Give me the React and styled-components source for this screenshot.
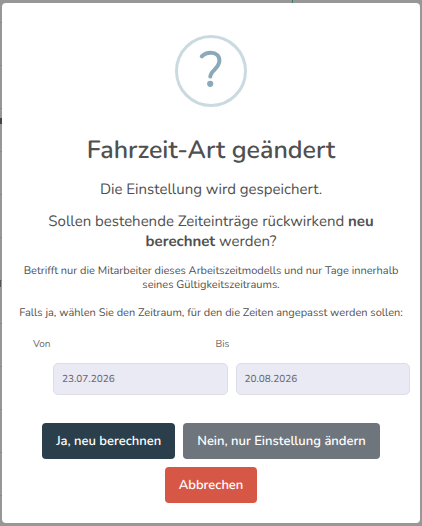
import React, { useState } from "react";
import styled, { createGlobalStyle } from "styled-components";

function App() {
	const [from, setFrom] = useState("23.07.2026");
	const [to, setTo] = useState("20.08.2026");

	return (
		<Backdrop>
			<GlobalStyle />
			<Dialog role="dialog" aria-modal="true" aria-labelledby="dialog-title">
				<QuestionIcon viewBox="0 0 72 72" aria-hidden="true">
					<circle cx="36" cy="36" r="34.5" stroke="#c9dae1" strokeWidth="3" />
					<path
						d="M26.8 21.4C29 19 32.3 17.8 35.8 17.8C41.3 17.8 44.4 20.9 44.4 25.6C44.4 29.8 42 32.2 39.4 34.8C36.8 37.4 35.5 39 35.3 41.6"
						stroke="#8aaaba"
						strokeWidth="4"
						strokeLinecap="round"
					/>
					<circle cx="35.2" cy="48.8" r="3.1" fill="#8aaaba" />
				</QuestionIcon>
				<Title id="dialog-title">Fahrzeit-Art geändert</Title>
				<Lead>Die Einstellung wird gespeichert.</Lead>
				<Lead>
					Sollen bestehende Zeiteinträge rückwirkend <strong>neu</strong>{" "}
					<strong>berechnet</strong> werden?
				</Lead>
				<Note>
					Betrifft nur die Mitarbeiter dieses Arbeitszeitmodells und nur Tage
					innerhalb seines Gültigkeitszeitraums.
				</Note>
				<Note>
					Falls ja, wählen Sie den Zeitraum, für den die Zeiten angepasst werden
					sollen:
				</Note>
				<Labels>
					<label htmlFor="from">Von</label>
					<label htmlFor="to">Bis</label>
				</Labels>
				<Inputs>
					<DateInput
						id="from"
						value={from}
						onChange={(e) => setFrom(e.target.value)}
					/>
					<DateInput
						id="to"
						value={to}
						onChange={(e) => setTo(e.target.value)}
					/>
				</Inputs>
				<Actions>
					<Button $color="#2a3f4b">Ja, neu berechnen</Button>
					<Button $color="#6e757d">Nein, nur Einstellung ändern</Button>
					<Button $color="#d65745">Abbrechen</Button>
				</Actions>
			</Dialog>
		</Backdrop>
	);
}

export default App;

const GlobalStyle = createGlobalStyle`
	* {
		box-sizing: border-box;
	}
	body {
		margin: 0;
		background: #979797;
		color: #505050;
		font-family: Nunito, "Open Sans", sans-serif;
		text-rendering: geometricPrecision;
	}
	button,
	input {
		font-family: inherit;
		text-rendering: inherit;
	}
`;

/* The dimmed page shows as a thin edge: table lines and one green marker */
const Backdrop = styled.div`
	min-height: 100vh;
	padding: 3px 2px;
	background:
		linear-gradient(#3f7a66, #3f7a66) 292px 0 / 1px 3px no-repeat,
		linear-gradient(#444, #444) 0 118px / 2px 6px no-repeat,
		linear-gradient(#555, #555) 0 280px / 1px 7px no-repeat,
		repeating-linear-gradient(#979797 0 22px, #888 22px 23px, #979797 23px 43px)
			0 0 / 2px 100% no-repeat;
`;

const Dialog = styled.main`
	display: flex;
	flex-direction: column;
	padding: 32px 0 20px;
	border-radius: 4px;
	background: #fff;
	text-align: center;
`;

const QuestionIcon = styled.svg`
	width: 72px;
	height: 72px;
	align-self: center;
	margin-bottom: 25px;
	fill: none;
`;

const Title = styled.h2`
	margin: 0 0 12px;
	font-size: 25px;
	font-weight: 600;
	line-height: 36px;
`;

const Lead = styled.p`
	margin: 0 40px 12px;
	font-size: 15px;
	font-weight: 400;
	line-height: 20px;
`;

const Note = styled.p`
	margin: 0 16px 14px;
	font-size: 11px;
	font-weight: 400;
	line-height: 14px;
`;

const Labels = styled.div`
	display: grid;
	grid-template-columns: 1fr 1fr;
	gap: 8px;
	margin: 2px 30px 11px 31px;
	font-size: 10px;
	line-height: 16px;
	text-align: left;
	color: #6b6b6b;
`;

const Inputs = styled.div`
	display: grid;
	grid-template-columns: 1fr 1fr;
	gap: 8px;
	margin: 0 10px 28px 51px;
`;

const DateInput = styled.input`
	min-width: 0;
	height: 32px;
	padding: 0 8px;
	border: 1px solid #dddde8;
	border-radius: 5px;
	background: #eaeaf4;
	color: #6a6a74;
	font-size: 10px;
	font-weight: 500;
`;

const Actions = styled.div`
	display: flex;
	flex-wrap: wrap;
	justify-content: center;
	gap: 8px;
`;

const Button = styled.button`
	height: 36px;
	padding: 0 14px;
	border: 0;
	border-radius: 4px;
	background: ${({ $color }) => $color};
	color: #fff;
	font-size: 13px;
	font-weight: 600;
`;
